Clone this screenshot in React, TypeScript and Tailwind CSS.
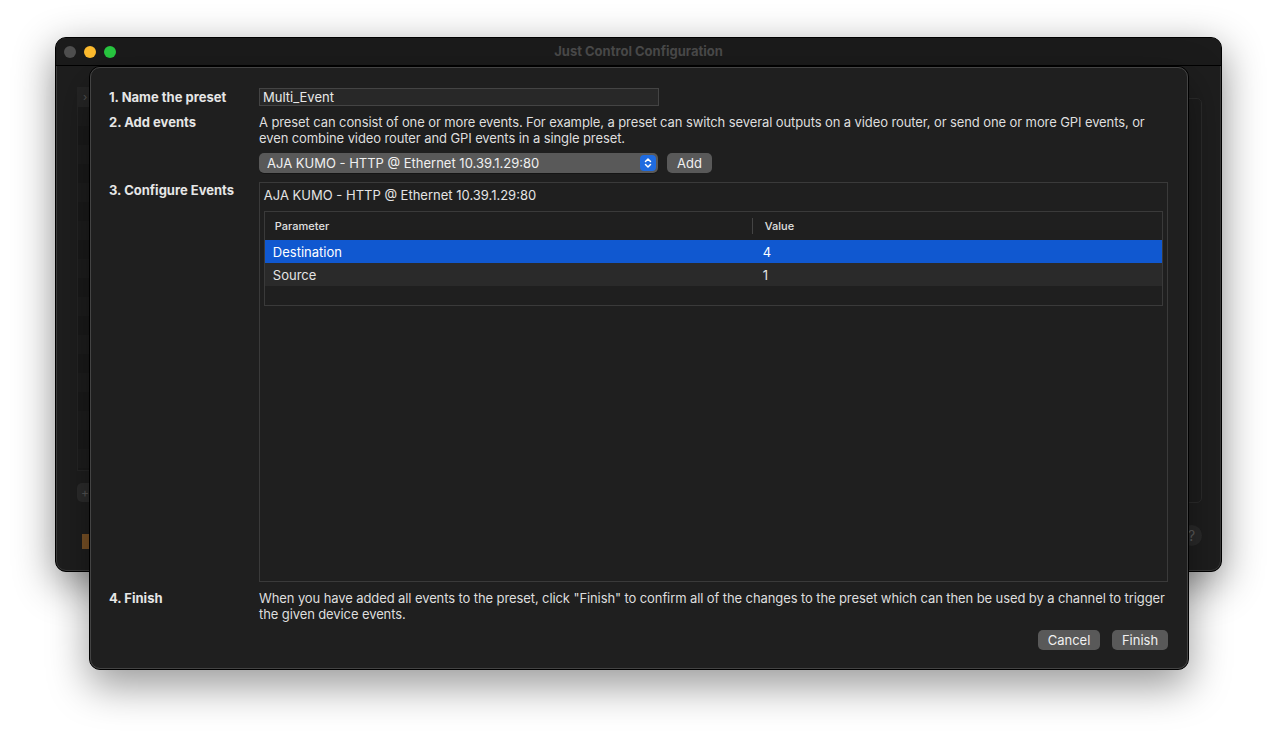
import React from "react";

const font = { fontFamily: "Inter, 'Noto Sans', 'Liberation Sans', sans-serif" };

function BackgroundWindow() {
  const rows = Array.from({ length: 20 });
  return (
    <div className="absolute left-[55px] top-[37px] w-[1167px] h-[535px] rounded-[11px] bg-[#1e1e1e] border border-black shadow-[0_12px_40px_rgba(0,0,0,0.45)] overflow-hidden">
      <div className="absolute inset-0 rounded-[10px] border border-[#3b3b3b] pointer-events-none" />
      <div className="h-[28px] bg-[#1b1b1b] border-b border-black flex items-center relative">
        <div className="flex items-center gap-[8px] pl-[8px]">
          <div className="w-[12px] h-[12px] rounded-full bg-[#4f4f4f]" />
          <div className="w-[12px] h-[12px] rounded-full bg-[#febc2e]" />
          <div className="w-[12px] h-[12px] rounded-full bg-[#28c840]" />
        </div>
        <div className="absolute inset-0 flex items-center justify-center text-[13px] font-bold text-[#4a4a4a]">
          Just Control Configuration
        </div>
      </div>
      <div className="flex px-[21px] pt-[21px] gap-4">
        <div className="w-[300px] flex flex-col">
          <div className="h-[384px] border border-[#262626] bg-[#1a1a1a] flex flex-col overflow-hidden">
            {rows.map((_, i) => (
              <div
                key={i}
                className={
                  "h-[19px] shrink-0 flex items-center pl-[5px] text-[11px] text-[#555] " +
                  (i === 0 ? "bg-[#262626]" : i % 2 === 0 ? "bg-[#1a1a1a]" : "bg-[#1d1d1d]")
                }
              >
                {i === 0 ? "›" : ""}
              </div>
            ))}
          </div>
          <div className="mt-[12px] w-[40px] h-[19px] rounded-[5px] bg-[#2c2c2c] flex items-center pl-[4px] text-[#555] text-[12px]">
            +
          </div>
          <div className="mt-[32px] ml-[5px] w-[8px] h-[15px] bg-[#7a5226]" />
        </div>
      </div>
      <div className="absolute right-[19px] top-[60px] w-[200px] h-[405px] rounded-[5px] border border-[#2c2c2c] bg-[#1d1d1d]" />
      <div className="absolute right-[19px] top-[487px] w-[21px] h-[21px] rounded-full bg-[#2a2a2a] flex items-center justify-center text-[#5c5c5c] text-[14px]">
        ?
      </div>
    </div>
  );
}

function Sheet() {
  return (
    <div className="absolute left-[89px] top-[66px] w-[1100px] h-[604px] rounded-[11px] bg-[#1f1f1f] border border-black shadow-[0_16px_40px_rgba(0,0,0,0.4)]">
      <div className="absolute inset-0 rounded-[10px] border border-[#444] pointer-events-none" />
      <div className="relative pl-[19px] pr-[20px] pt-[21px] pb-[20px] flex flex-col h-full text-[13px] text-[#dedede] leading-[16px]">
        {/* Row 1 */}
        <div className="flex items-center">
          <div className="w-[150px] font-bold text-[#e6e6e6]">1. Name the preset</div>
          <div className="w-[400px] h-[18px] bg-[#282828] border border-[#444] flex items-center pl-[3px] text-[13px] text-[#e8e8e8]">
            Multi_Event
          </div>
        </div>
        {/* Row 2 */}
        <div className="flex mt-[8px]">
          <div className="w-[150px] font-bold text-[#e6e6e6]">2. Add events</div>
          <div className="flex-1 flex flex-col">
            <div className="whitespace-nowrap tracking-[-0.1px]">
              A preset can consist of one or more events. For example, a preset can switch several outputs on a video router, or send one or more GPI events, or
              <br />
              even combine video router and GPI events in a single preset.
            </div>
            <div className="flex items-center mt-[7px] gap-[9px]">
              <div className="w-[399px] h-[20px] rounded-[5px] bg-[#595959] flex items-center justify-between pl-[8px] pr-[2px] text-[#f0f0f0] shadow-[0_1px_0_rgba(0,0,0,0.3)]">
                <span>AJA KUMO - HTTP @ Ethernet 10.39.1.29:80</span>
                <div className="w-[16px] h-[16px] rounded-[4px] bg-[#1f6be0] flex items-center justify-center">
                  <svg width="10" height="12" viewBox="0 0 10 12" fill="none" stroke="white" strokeWidth="1.5" strokeLinecap="round" strokeLinejoin="round">
                    <path d="M2.5 4.5 L5 2 L7.5 4.5" />
                    <path d="M2.5 7.5 L5 10 L7.5 7.5" />
                  </svg>
                </div>
              </div>
              <div className="w-[45px] h-[20px] rounded-[5px] bg-[#595959] flex items-center justify-center text-[#f0f0f0]">
                Add
              </div>
            </div>
          </div>
        </div>
        {/* Row 3 */}
        <div className="flex mt-[9px]">
          <div className="w-[150px] font-bold text-[#e6e6e6]">3. Configure Events</div>
          <div className="w-[910px] h-[400px] border border-[#3a3a3a] bg-[#1f1f1f] px-[4px] pt-[4px] flex flex-col">
            <div className="text-[#e4e4e4]">AJA KUMO - HTTP @ Ethernet 10.39.1.29:80</div>
            <div className="mt-[8px] h-[95px] border border-[#3a3a3a] flex flex-col bg-[#1f1f1f]">
              <div className="h-[28px] flex items-center text-[11px] text-[#e0e0e0] font-medium">
                <div className="w-[487px] pl-[10px]">Parameter</div>
                <div className="w-px h-[16px] bg-[#444]" />
                <div className="pl-[12px]">Value</div>
              </div>
              <div className="h-[23px] bg-[#1058d0] flex items-center text-white">
                <div className="w-[488px] pl-[8px]">Destination</div>
                <div className="pl-[10px]">4</div>
              </div>
              <div className="h-[23px] bg-[#2a2a2a] flex items-center text-[#e4e4e4]">
                <div className="w-[488px] pl-[8px]">Source</div>
                <div className="pl-[10px]">1</div>
              </div>
            </div>
          </div>
        </div>
        {/* Row 4 */}
        <div className="flex mt-[8px]">
          <div className="w-[150px] font-bold text-[#e6e6e6]">4. Finish</div>
          <div className="flex-1 whitespace-nowrap tracking-[-0.1px]">
            When you have added all events to the preset, click "Finish" to confirm all of the changes to the preset which can then be used by a channel to trigger
            <br />
            the given device events.
          </div>
        </div>
        <div className="flex justify-end gap-[12px] mt-[8px]">
          <div className="w-[62px] h-[20px] rounded-[5px] bg-[#595959] flex items-center justify-center text-[#f0f0f0]">
            Cancel
          </div>
          <div className="w-[56px] h-[20px] rounded-[5px] bg-[#595959] flex items-center justify-center text-[#f0f0f0]">
            Finish
          </div>
        </div>
      </div>
    </div>
  );
}

export default function App() {
  return (
    <div className="relative w-[1278px] h-[744px] bg-white overflow-hidden" style={font}>
      <BackgroundWindow />
      <Sheet />
    </div>
  );
}
